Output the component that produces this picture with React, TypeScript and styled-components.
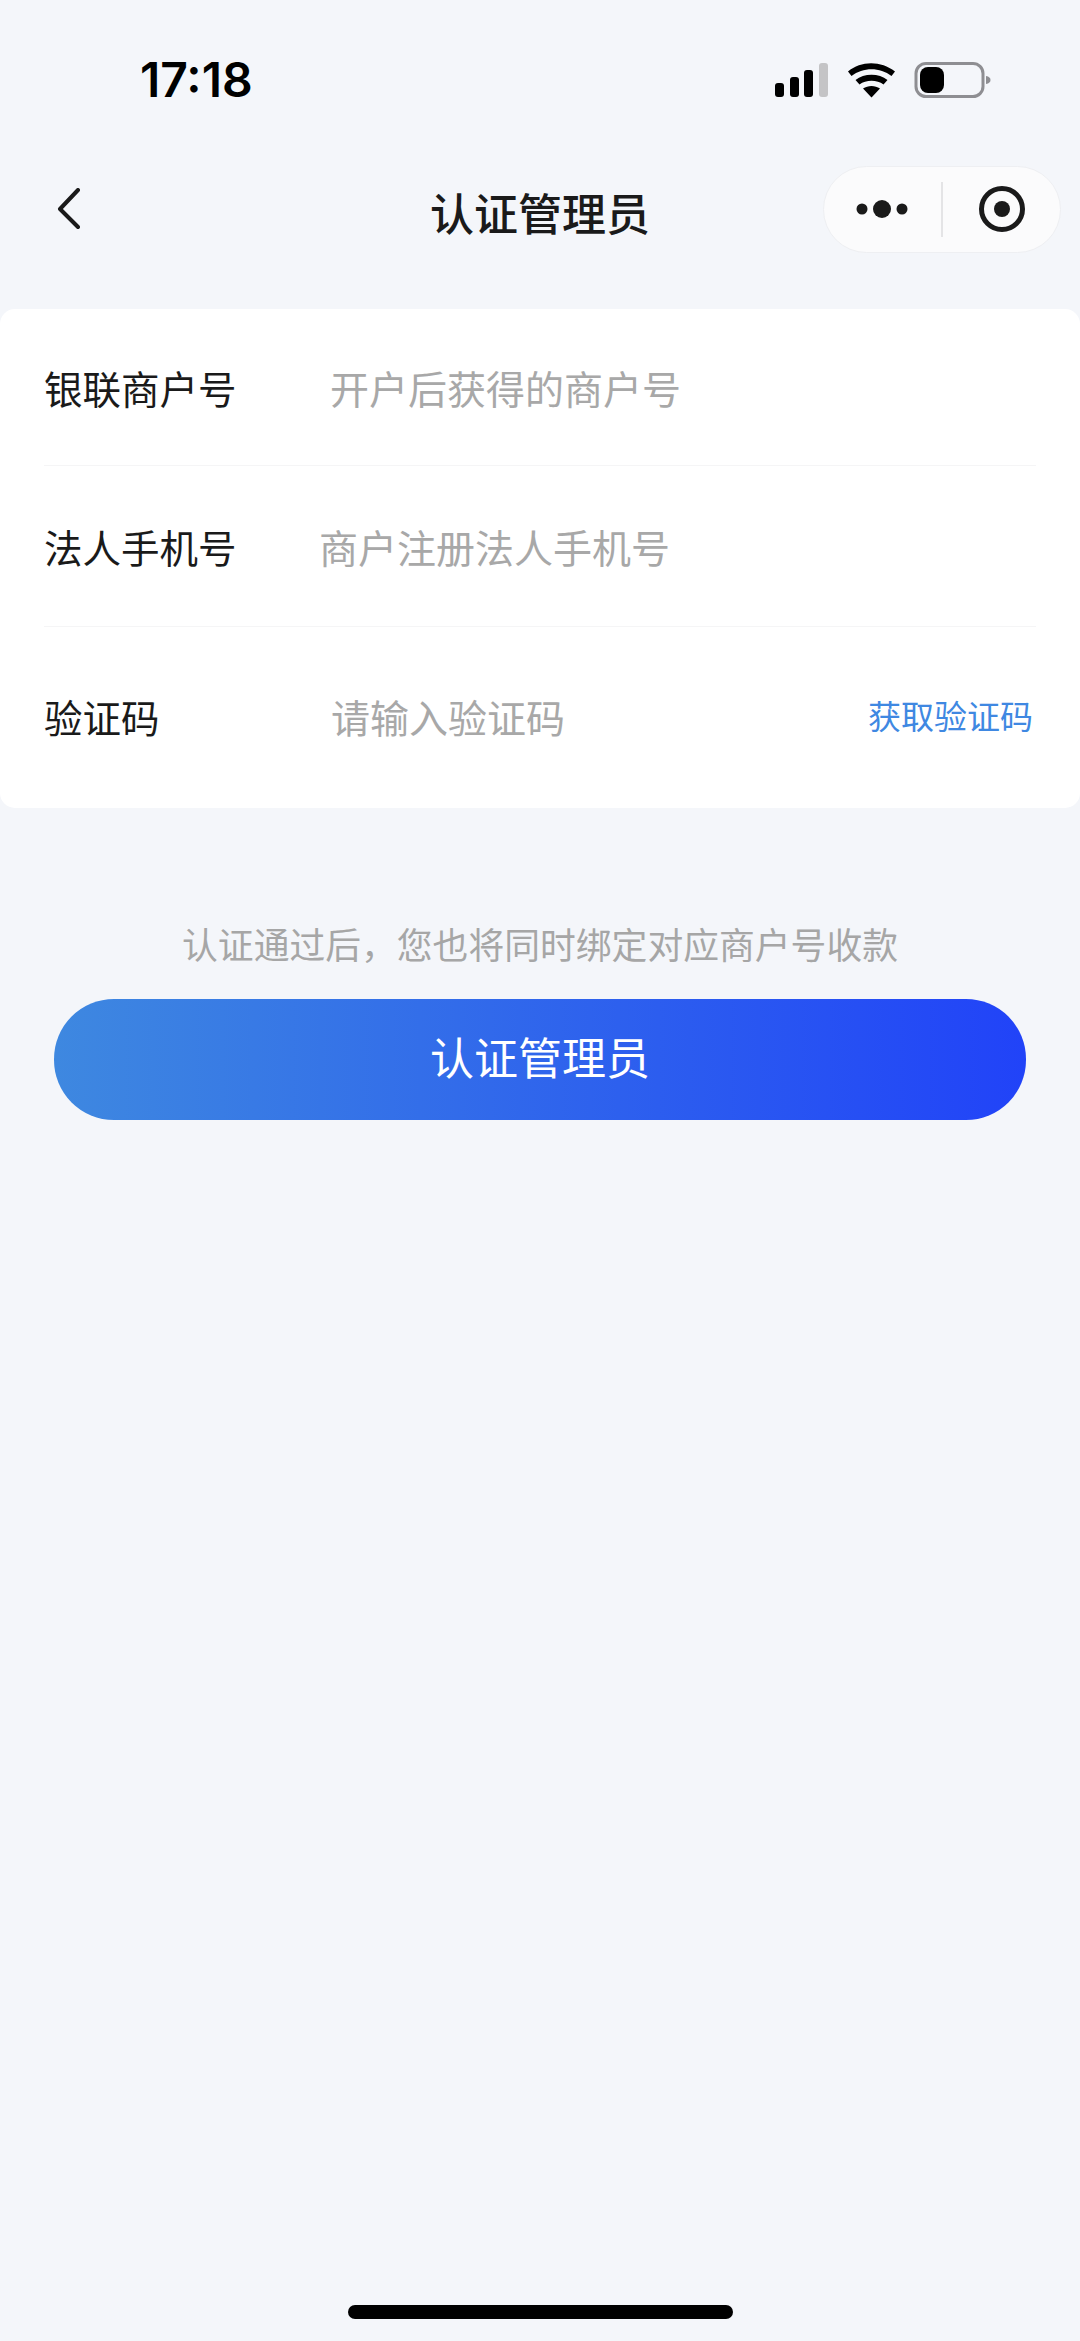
import React, { FC } from 'react'
import styled, { createGlobalStyle } from 'styled-components'

const GlobalStyle = createGlobalStyle`
  html, body {
    margin: 0;
    padding: 0;
    background: #f4f6fa;
  }

  * {
    box-sizing: border-box;
  }
`

const Page = styled.div`
  width: 1080px;
  height: 2341px;
  display: flex;
  flex-direction: column;
  background: #f4f6fa;
  font-family: 'Noto Sans CJK SC', 'Liberation Sans', sans-serif;
  overflow: hidden;
`

const StatusBar = styled.div`
  height: 159px;
  padding: 50px 89px 0 140px;
  display: flex;
  justify-content: space-between;
  align-items: flex-start;
`

const Time = styled.div`
  font-family: Inter, 'Liberation Sans', sans-serif;
  font-size: 48px;
  line-height: 60px;
  font-weight: 600;
  color: #000;
`

const StatusIconsWrap = styled.div`
  margin-top: 12px;
  display: flex;
`

const NavBar = styled.div`
  height: 100px;
  padding: 0 19px 0 19px;
  display: grid;
  grid-template-columns: 1fr auto 1fr;
  align-items: center;
`

const BackButton = styled.div`
  margin-left: 38px;
  display: flex;
  align-items: center;
`

const NavTitle = styled.div`
  padding-top: 5px;
  font-size: 44px;
  line-height: 60px;
  font-weight: 500;
  color: #1a1a1a;
`

const Capsule = styled.div`
  justify-self: end;
  width: 238px;
  height: 87px;
  display: grid;
  grid-template-columns: 1fr 2px 1fr;
  align-items: center;
  justify-items: center;
  background: #fbfbfc;
  border: 1px solid #eeeff2;
  border-radius: 44px;
`

const CapsuleDivider = styled.div`
  width: 2px;
  height: 55px;
  background: #e4e4e6;
`

const Card = styled.div`
  margin-top: 50px;
  padding: 0 44px;
  background: #fff;
  border-radius: 15px;
`

const Row = styled.div<{ $height: number; $divider?: boolean; $lift?: number }>`
  height: ${p => p.$height}px;
  padding-bottom: ${p => p.$lift ?? 0}px;
  display: flex;
  align-items: center;
  border-bottom: ${p => (p.$divider ? '1.5px solid #f5f5f6' : 'none')};
`

const Label = styled.div`
  width: 275px;
  flex: none;
  font-size: 38.5px;
  line-height: 56px;
  color: #1a1a1a;
`

const Placeholder = styled.div<{ $indent: number }>`
  flex: 1;
  padding-left: ${p => p.$indent}px;
  font-size: 39px;
  line-height: 56px;
  color: #a8a8a8;
`

const CodeLink = styled.div`
  margin: 0 3px 3px 0;
  font-size: 33px;
  line-height: 48px;
  color: #3f88e2;
`

const Hint = styled.div`
  margin-top: 109px;
  font-size: 35.8px;
  line-height: 52px;
  text-align: center;
  color: #a6a6a6;
`

const SubmitButton = styled.div`
  margin: 30px 54px 0;
  height: 121px;
  padding-bottom: 8px;
  display: flex;
  align-items: center;
  justify-content: center;
  border-radius: 60px;
  background: linear-gradient(90deg, #3e88e0 0%, #2143f8 100%);
  font-size: 44px;
  color: #fff;
`

const HomeBar = styled.div`
  margin: auto auto 22px;
  width: 385px;
  height: 14px;
  border-radius: 7px;
  background: #000;
`

const StatusIcons: FC = () => (
  <svg width="216" height="36" viewBox="0 0 216 36">
    <rect x="0" y="21" width="9" height="14" rx="3" fill="#000" />
    <rect x="15" y="15" width="9" height="20" rx="3" fill="#000" />
    <rect x="29" y="8" width="9" height="27" rx="3" fill="#000" />
    <rect x="44" y="1" width="9" height="34" rx="3" fill="#c4c4c6" />
    <path d="M73 9.5C86 -1.5 106 -1.5 120 9.5L116.5 14C105 5 88 5 76.5 14Z" fill="#000" />
    <path d="M80.5 18C89 11 104 11 112.5 18L108.5 22.5C102 17.5 91 17.5 84.5 22.5Z" fill="#000" />
    <path d="M88 26.5C93 23 100 23 105 26.5L96.5 35.5Z" fill="#000" />
    <rect x="141" y="1.5" width="67" height="33" rx="10" fill="none" stroke="#8e8e92" strokeWidth="3" />
    <rect x="145" y="5" width="24" height="26" rx="8" fill="#000" />
    <path d="M211 14C214 14.5 215.5 16 215.5 18C215.5 20 214 21.5 211 22Z" fill="#8e8e92" />
  </svg>
)

const BackIcon: FC = () => (
  <svg width="24" height="42" viewBox="0 0 24 42">
    <path d="M21 2L3 21L21 39" fill="none" stroke="#1a1a1a" strokeWidth="4" strokeLinecap="round" strokeLinejoin="round" />
  </svg>
)

const MoreIcon: FC = () => (
  <svg width="54" height="20" viewBox="0 0 54 20">
    <circle cx="6" cy="10" r="5.5" fill="#1a1a1a" />
    <circle cx="26" cy="10" r="9" fill="#1a1a1a" />
    <circle cx="46" cy="10" r="5.5" fill="#1a1a1a" />
  </svg>
)

const RecordIcon: FC = () => (
  <svg width="48" height="48" viewBox="0 0 48 48">
    <circle cx="24" cy="24" r="20.5" fill="none" stroke="#1a1a1a" strokeWidth="5" />
    <circle cx="24" cy="24" r="8" fill="#1a1a1a" />
  </svg>
)

const App: FC = () => {
  return (
    <Page>
      <GlobalStyle />
      <StatusBar>
        <Time>17:18</Time>
        <StatusIconsWrap>
          <StatusIcons />
        </StatusIconsWrap>
      </StatusBar>
      <NavBar>
        <BackButton>
          <BackIcon />
        </BackButton>
        <NavTitle>认证管理员</NavTitle>
        <Capsule>
          <MoreIcon />
          <CapsuleDivider />
          <RecordIcon />
        </Capsule>
      </NavBar>
      <Card>
        <Row $height={157} $divider>
          <Label>银联商户号</Label>
          <Placeholder $indent={11}>开户后获得的商户号</Placeholder>
        </Row>
        <Row $height={161} $divider>
          <Label>法人手机号</Label>
          <Placeholder $indent={0}>商户注册法人手机号</Placeholder>
        </Row>
        <Row $height={181} $lift={3}>
          <Label>验证码</Label>
          <Placeholder $indent={12}>请输入验证码</Placeholder>
          <CodeLink>获取验证码</CodeLink>
        </Row>
      </Card>
      <Hint>认证通过后，您也将同时绑定对应商户号收款</Hint>
      <SubmitButton>认证管理员</SubmitButton>
      <HomeBar />
    </Page>
  )
}

export default App
